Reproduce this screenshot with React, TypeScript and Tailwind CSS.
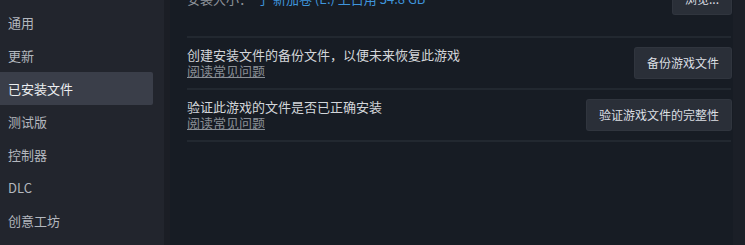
const NAV = ["通用", "更新", "已安装文件", "测试版", "控制器", "DLC", "创意工坊"];

const ROWS = [
  {
    title: "创建安装文件的备份文件，以便未来恢复此游戏",
    action: "备份游戏文件",
  },
  {
    title: "验证此游戏的文件是否已正确安装",
    action: "验证游戏文件的完整性",
  },
];

function Button({ children }: { children: React.ReactNode }) {
  return (
    <button className="h-[30px] shrink-0 rounded-[2px] bg-[#2a2f38] px-3 text-[12px] text-[#dcdfe3] shadow-[0_0_0_1px_#30353e]">
      {children}
    </button>
  );
}

export default function App() {
  return (
    <div
      className="flex h-[245px] w-[745px] overflow-hidden bg-[#171c24] text-[13px]"
      style={{ fontFamily: '"Noto Sans CJK SC", "Noto Sans", sans-serif' }}
    >
      {/* Sidebar */}
      <div className="flex w-[170px] shrink-0 border-r-[6px] border-[#1b1e25] bg-[#22252d] pt-[6px]">
        <div className="flex w-[153px] flex-col">
          {NAV.map((item) => {
            const active = item === "已安装文件";
            return (
              <div
                key={item}
                className={
                  active
                    ? "flex h-[33px] items-center rounded-r-[2px] bg-[#3a3e49] pl-[8px] text-[#eceef0]"
                    : "flex h-[33px] items-center pl-[8px] text-[#b3b7be]"
                }
              >
                {item}
              </div>
            );
          })}
        </div>
      </div>

      {/* Main */}
      <div className="flex min-w-0 flex-1">
        <div className="flex min-w-0 flex-1 flex-col pl-[17px] pr-[2px]">
          <div className="-mt-[16px] flex items-center justify-between border-b-2 border-[#222830] pb-[22px]">
            <div className="flex items-center">
              <span className="w-[70px] text-[#8d9299]">安装大小：</span>
              <span className="text-[#3f95dc]">于 新加卷 (E:) 上占用 34.8 GB</span>
            </div>
            <Button>浏览...</Button>
          </div>
          {ROWS.map((row) => (
            <div
              key={row.action}
              className="flex items-center justify-between border-b-2 border-[#222830] py-[9px]"
            >
              <div className="flex flex-col leading-[16px]">
                <span className="text-[#d3d6da]">{row.title}</span>
                <span className="text-[#8a8f96] underline underline-offset-1">阅读常见问题</span>
              </div>
              <Button>{row.action}</Button>
            </div>
          ))}
        </div>
        <div className="w-[12px] shrink-0 bg-[#1b1f27]" />
      </div>
    </div>
  );
}
